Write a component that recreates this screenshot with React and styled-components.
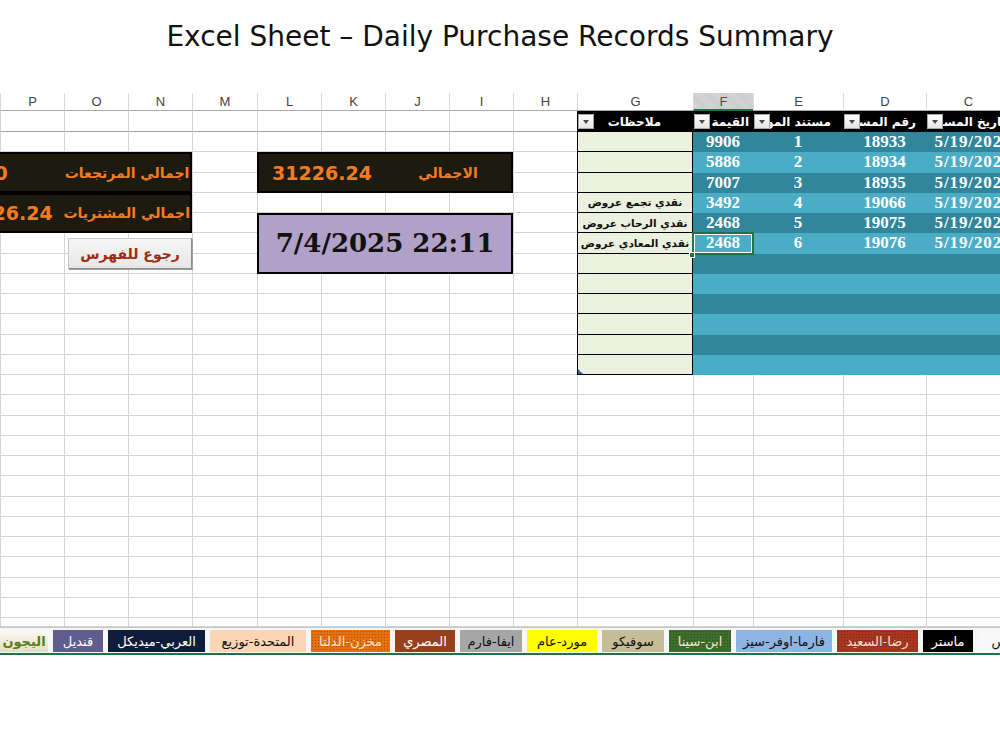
import React from "react";
import styled, { createGlobalStyle } from "styled-components";

const GlobalStyle = createGlobalStyle`
  *, *::before, *::after { box-sizing: border-box; }
  html, body { margin: 0; padding: 0; background: #fff; }
  body { font-family: "DejaVu Sans", "Liberation Sans", sans-serif; }
`;

// sheet geometry
const COLS = ["P", "O", "N", "M", "L", "K", "J", "I", "H", "G", "F", "E", "D", "C"];
const COL_WIDTHS = "64px 64px 64px 65px 64px 64px 64px 64px 64px 116px 60px 90px 83px 84px";
const ROW_H = 20.25;
const LAST_ROW = 27;

const PURCHASES = [
  { value: "9906", supplier: "1", doc: "18933", date: "5/19/2025", note: "" },
  { value: "5886", supplier: "2", doc: "18934", date: "5/19/2025", note: "" },
  { value: "7007", supplier: "3", doc: "18935", date: "5/19/2025", note: "" },
  { value: "3492", supplier: "4", doc: "19066", date: "5/19/2025", note: "نقدي تجمع عروض" },
  { value: "2468", supplier: "5", doc: "19075", date: "5/19/2025", note: "نقدي الرحاب عروض" },
  { value: "2468", supplier: "6", doc: "19076", date: "5/19/2025", note: "نقدي المعادي عروض" },
  ...Array.from({ length: 6 }, () => ({ value: "", supplier: "", doc: "", date: "", note: "" })),
];

const HEADERS = [
  { label: "ملاحظات", center: true, pad: 18 },
  { label: "القيمة", pad: 4 },
  { label: "مستند المورد", pad: 12 },
  { label: "رقم المستند", pad: 10 },
  { label: "تاريخ المستند", pad: 4 },
];

const TABS = [
  { name: "اليجون", w: 48, bg: "linear-gradient(#fbfbf6, #e2dec4)", fg: "#5e7a16", active: true },
  { name: "قنديل", w: 50, bg: "#605c8e", fg: "#fff" },
  { name: "العربي-ميديكل", w: 97, bg: "#0f1d3b", fg: "#fff" },
  { name: "المتحدة-توزيع", w: 96, bg: "#fcd5b4", fg: "#111" },
  { name: "مخزن-الدلتا", w: 79, bg: "#e4700e", fg: "#fde3c8", dotted: true },
  { name: "المصري", w: 60, bg: "#97401a", fg: "#fff" },
  { name: "ايفا-فارم", w: 62, bg: "#a6a6a6", fg: "#111" },
  { name: "مورد-عام", w: 70, bg: "#ffff00", fg: "#111" },
  { name: "سوفيكو", w: 62, bg: "#c4bd97", fg: "#111" },
  { name: "ابن-سينا", w: 62, bg: "#3f6e2c", fg: "#e8ead8", dotted: true },
  { name: "فارما-اوفر-سيز", w: 96, bg: "#8db4e2", fg: "#111" },
  { name: "رضا-السعيد", w: 81, bg: "#a6361f", fg: "#f6dccf", dotted: true },
  { name: "ماستر", w: 50, bg: "#000", fg: "#fff" },
  { name: "الفهرس", w: 70, bg: "#f8f8f8", fg: "#111" },
];

const Page = styled.div`
  width: 1000px;
  height: 750px;
  overflow: hidden;
  background: #fff;
`;

const Title = styled.h1`
  margin: 0;
  height: 93px;
  padding-top: 21px;
  text-align: center;
  font-family: "DejaVu Sans", sans-serif;
  font-weight: normal;
  font-size: 28px;
  line-height: 32px;
  color: #111;
`;

const Sheet = styled.div`
  width: 1000px;
  overflow: hidden;
  display: grid;
  grid-template-columns: ${COL_WIDTHS};
  grid-template-rows: 18px 21px repeat(24, ${ROW_H}px) 9px;
`;

const ColHead = styled.div`
  grid-row: 1;
  grid-column: ${(p) => p.$c};
  display: flex;
  align-items: center;
  justify-content: center;
  font-family: "Liberation Sans", Arial, sans-serif;
  font-size: 13px;
  color: ${(p) => (p.$active ? "#1f6b3f" : "#444")};
  background: ${(p) =>
    p.$active
      ? "repeating-linear-gradient(45deg, #d6d6d6 0 1px, #cbcbcb 1px 2px)"
      : "#fff"};
  border-left: 1px solid #dadada;
  border-bottom: ${(p) => (p.$active ? "2px solid #217346" : "1px solid #a9a9a9")};
`;

const Cell = styled.div`
  grid-row: ${(p) => p.$r};
  grid-column: ${(p) => p.$c};
  border-left: 1px solid #d4d4d4;
  border-bottom: 1px solid ${(p) => (p.$frozen ? "#a3a3a3" : "#d4d4d4")};
`;

const StatBox = styled.div`
  grid-column: ${(p) => p.$cols};
  grid-row: ${(p) => p.$rows};
  margin-left: ${(p) => p.$bleed || 0}px;
  display: grid;
  grid-template-columns: 1fr 1fr;
  align-items: center;
  background: #1d1a0f;
  border: 2px solid #000;
  color: #f47b20;
  font-weight: bold;
  position: relative;
  z-index: 1;
`;

const StatValue = styled.span`
  font-family: "DejaVu Sans", sans-serif;
  font-size: 19px;
  text-align: center;
  white-space: nowrap;
  padding-left: ${(p) => p.$shift || 0}px;
`;

const StatLabel = styled.span`
  font-family: "DejaVu Sans", sans-serif;
  font-size: 14px;
  text-align: center;
  direction: rtl;
  white-space: nowrap;
`;

const DateBox = styled.div`
  grid-column: 5 / 9;
  grid-row: 7 / 10;
  display: flex;
  align-items: center;
  justify-content: center;
  background: #b1a0c7;
  border: 2px solid #000;
  font-family: "DejaVu Serif", "Liberation Serif", serif;
  font-weight: bold;
  font-size: 26px;
  color: #111;
  position: relative;
  z-index: 1;
`;

const BackButton = styled.button`
  grid-column: 2 / 4;
  grid-row: 8 / 10;
  margin: 5px 0 5px 4px;
  border: 1px solid #c9c9c9;
  border-right-color: #8c8c8c;
  border-bottom-color: #8c8c8c;
  box-shadow: 1px 1px 0 #a0a0a0;
  background: linear-gradient(#f6f6f6, #e6e6e6);
  color: #9e2c12;
  font-family: "DejaVu Sans", sans-serif;
  font-weight: bold;
  font-size: 14px;
  direction: rtl;
  padding: 0;
  position: relative;
  z-index: 1;
`;

const Table = styled.div`
  grid-column: 10 / 15;
  grid-row: 2 / 15;
  display: grid;
  grid-template-columns: 116px 60px 90px 83px 84px;
  grid-template-rows: 21px repeat(12, ${ROW_H}px);
  position: relative;
  z-index: 1;
`;

const HeadCell = styled.div`
  display: flex;
  align-items: center;
  background: #000;
  padding-left: 1px;
  overflow: hidden;
`;

const DropButton = styled.span`
  flex: none;
  width: 16px;
  height: 15px;
  display: flex;
  align-items: center;
  justify-content: center;
  background: linear-gradient(#ffffff, #e4e4e4);
  border: 1px solid #a8a8a8;

  &::after {
    content: "";
    border-left: 3.5px solid transparent;
    border-right: 3.5px solid transparent;
    border-top: 4px solid #4a4a4a;
  }
`;

const HeadLabel = styled.span`
  flex: 1;
  min-width: 0;
  overflow: hidden;
  white-space: nowrap;
  direction: rtl;
  text-align: ${(p) => (p.$center ? "center" : "right")};
  padding-right: ${(p) => p.$pad}px;
  color: #fff;
  font-family: "DejaVu Sans", sans-serif;
  font-weight: bold;
  font-size: 12px;
`;

const NoteCell = styled.div`
  display: flex;
  align-items: center;
  justify-content: center;
  background: #ebf1de;
  border-left: 1px solid #000;
  border-right: 1px solid #000;
  border-bottom: 1px solid #000;
  direction: rtl;
  white-space: nowrap;
  font-family: "DejaVu Sans", sans-serif;
  font-weight: bold;
  font-size: 10.5px;
  color: #111;
  position: relative;

  &::after {
    content: "";
    display: ${(p) => (p.$last ? "block" : "none")};
    position: absolute;
    left: 0;
    bottom: 0;
    border-bottom: 5px solid #3f5ea8;
    border-right: 5px solid transparent;
  }
`;

const DataCell = styled.div`
  display: flex;
  align-items: center;
  justify-content: center;
  background: ${(p) => (p.$dark ? "#31869b" : "#4bacc6")};
  color: #fff;
  font-family: "Liberation Serif", "Times New Roman", serif;
  font-weight: bold;
  font-size: 17px;
  white-space: nowrap;
  position: relative;
  ${(p) =>
    p.$selected &&
    `
    outline: 2px solid #217346;
    outline-offset: -1px;
    box-shadow: inset 0 0 0 2px #fff;
    z-index: 2;

    &::after {
      content: "";
      position: absolute;
      left: -4px;
      bottom: -4px;
      width: 6px;
      height: 6px;
      background: #217346;
      border: 1px solid #fff;
    }
  `}
`;

const DateText = styled.span`
  letter-spacing: 0.9px;
  padding-left: 10px;
`;

const TabBar = styled.div`
  display: flex;
  gap: 5px;
  height: 28px;
  padding-top: 2px;
  border-top: 1px solid #c6c6c6;
  border-bottom: 2px solid #217346;
  background: #f6f6f6;
  overflow: hidden;
`;

const Tab = styled.div`
  flex: none;
  width: ${(p) => p.$w}px;
  height: 22px;
  display: flex;
  align-items: center;
  justify-content: center;
  background: ${(p) => p.$bg};
  color: ${(p) => p.$fg};
  font-family: "DejaVu Sans", sans-serif;
  font-size: 13px;
  font-weight: ${(p) => (p.$active ? "bold" : "normal")};
  direction: rtl;
  white-space: nowrap;
  position: relative;
  ${(p) =>
    p.$dotted &&
    `
    background-image: radial-gradient(rgba(0, 0, 0, 0.28) 0.7px, transparent 1px);
    background-size: 3px 3px;
  `}

  & + &::before {
    content: "";
    position: absolute;
    left: -3px;
    top: 2px;
    bottom: 2px;
    width: 1px;
    background: #c2c2c2;
  }
`;

function GridLines() {
  const cells = [];
  COLS.forEach((col, i) => {
    cells.push(
      <ColHead key={`h-${col}`} $c={i + 1} $active={col === "F"}>
        {col}
      </ColHead>
    );
  });
  for (let r = 2; r <= LAST_ROW; r++) {
    for (let c = 1; c <= COLS.length; c++) {
      cells.push(<Cell key={`${r}-${c}`} $r={r} $c={c} $frozen={r === 2} />);
    }
  }
  return cells;
}

function PurchaseTable() {
  return (
    <Table>
      {HEADERS.map((h) => (
        <HeadCell key={h.label}>
          <DropButton />
          <HeadLabel $center={h.center} $pad={h.pad}>
            {h.label}
          </HeadLabel>
        </HeadCell>
      ))}
      {PURCHASES.map((row, i) => (
        <React.Fragment key={i}>
          <NoteCell $last={i === PURCHASES.length - 1}>{row.note}</NoteCell>
          <DataCell $dark={i % 2 === 0} $selected={i === 5}>
            {row.value}
          </DataCell>
          <DataCell $dark={i % 2 === 0}>{row.supplier}</DataCell>
          <DataCell $dark={i % 2 === 0}>{row.doc}</DataCell>
          <DataCell $dark={i % 2 === 0}>
            <DateText>{row.date}</DateText>
          </DataCell>
        </React.Fragment>
      ))}
    </Table>
  );
}

export default function App() {
  return (
    <Page>
      <GlobalStyle />
      <Title>Excel Sheet – Daily Purchase Records Summary</Title>
      <Sheet>
        <GridLines />

        <StatBox $cols="1 / 4" $rows="4 / 6" $bleed={-64}>
          <StatValue>0</StatValue>
          <StatLabel>اجمالي المرتجعات</StatLabel>
        </StatBox>
        <StatBox $cols="1 / 4" $rows="6 / 8" $bleed={-64}>
          <StatValue $shift={4}>31226.24</StatValue>
          <StatLabel>اجمالي المشتريات</StatLabel>
        </StatBox>
        <BackButton>رجوع للفهرس</BackButton>

        <StatBox $cols="5 / 9" $rows="4 / 6">
          <StatValue>31226.24</StatValue>
          <StatLabel>الاجمالي</StatLabel>
        </StatBox>
        <DateBox>7/4/2025 22:11</DateBox>

        <PurchaseTable />
      </Sheet>
      <TabBar>
        {TABS.map((t) => (
          <Tab key={t.name} $w={t.w} $bg={t.bg} $fg={t.fg} $active={t.active} $dotted={t.dotted}>
            {t.name}
          </Tab>
        ))}
      </TabBar>
    </Page>
  );
}
